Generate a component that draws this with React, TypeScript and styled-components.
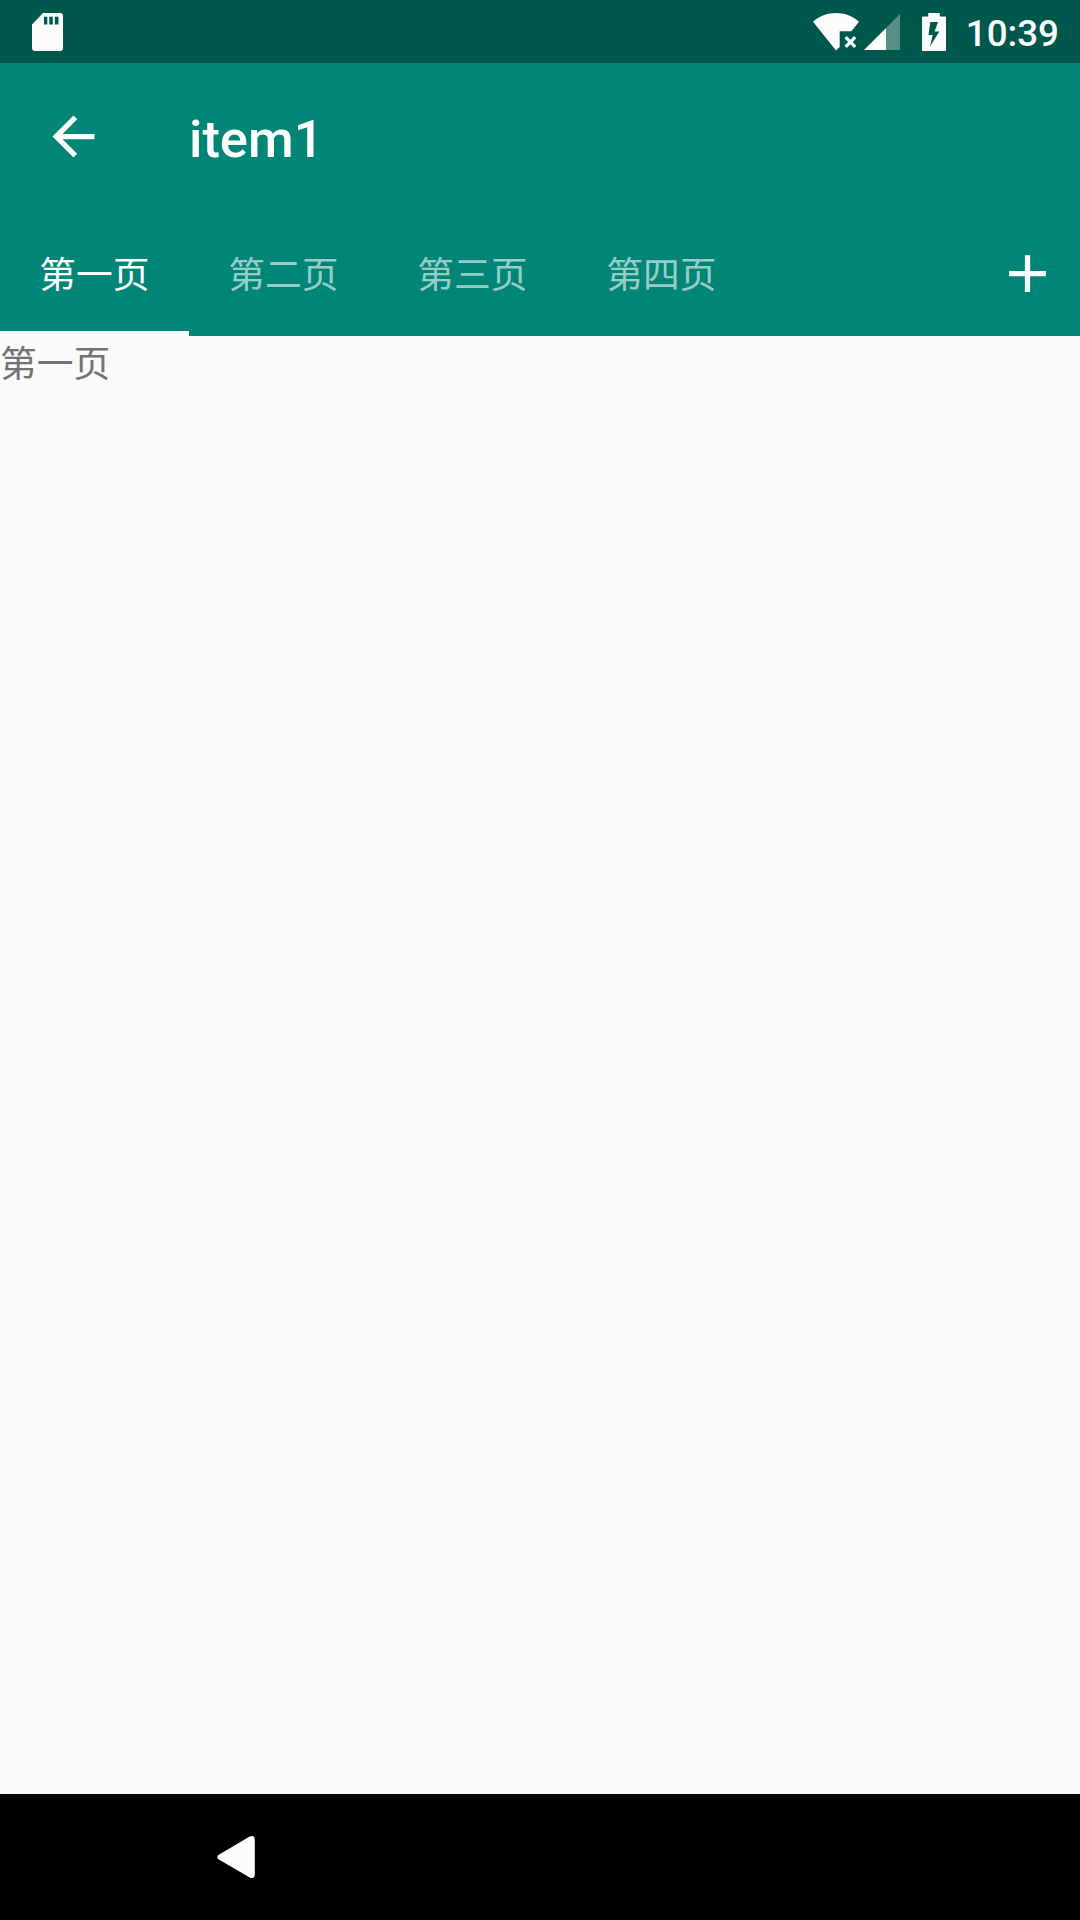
import React, { useState } from "react";
import styled, { createGlobalStyle } from "styled-components";

const GlobalStyle = createGlobalStyle`
  * { box-sizing: border-box; }
  body { margin: 0; }
`;

const Screen = styled.div`
  display: flex;
  flex-direction: column;
  width: 1080px;
  height: 1920px;
  overflow: hidden;
  background: #fafafa;
  font-family: Roboto, "Noto Sans CJK SC", sans-serif;
`;

const StatusBar = styled.header`
  display: flex;
  flex: none;
  align-items: center;
  height: 63px;
  padding: 0 21px 0 32px;
  background: #00574b;
  color: #fcfcfc;
`;

const StatusIcon = styled.svg<{ $gap?: number }>`
  display: block;
  flex: none;
  margin-right: ${(p) => p.$gap ?? 0}px;
`;

const Spacer = styled.div`
  flex: 1;
`;

const Clock = styled.time`
  font-size: 36.75px;
  font-weight: 500;
  line-height: 43px;
  padding-top: 3px;
`;

const Toolbar = styled.div`
  display: flex;
  flex: none;
  align-items: center;
  height: 147px;
  padding-left: 42px;
  gap: 84px;
  background: #008577;
  color: #fff;
`;

const IconButton = styled.button`
  display: flex;
  width: 63px;
  height: 63px;
  padding: 0;
  border: 0;
  background: none;
  color: #fff;
`;

const Title = styled.h1`
  margin: 0;
  padding-top: 5px;
  font-size: 52.5px;
  font-weight: 500;
  line-height: 62px;
`;

const TabBar = styled.nav`
  display: flex;
  flex: none;
  align-items: center;
  justify-content: space-between;
  height: 126px;
  padding-right: 21px;
  background: #008577;
`;

const TabList = styled.div`
  display: flex;
  height: 100%;
`;

const Tab = styled.button<{ $active: boolean }>`
  width: 189px;
  padding: 2px 0 0;
  border: 0;
  border-bottom: 5px solid ${(p) => (p.$active ? "#fff" : "transparent")};
  background: none;
  color: ${(p) => (p.$active ? "#fff" : "rgba(255, 255, 255, 0.6)")};
  font-family: "Noto Sans CJK SC", sans-serif;
  font-size: 36.75px;
  font-weight: 400;
  line-height: 54px;
`;

const Page = styled.main`
  flex: 1;
  color: #737373;
  font-family: "Noto Sans CJK SC", sans-serif;
  font-size: 36.75px;
  font-weight: 400;
  line-height: 50px;
`;

const NavigationBar = styled.footer`
  display: flex;
  flex: none;
  align-items: center;
  height: 126px;
  padding-left: 217px;
  background: #000;
`;

const pages = ["第一页", "第二页", "第三页", "第四页"];

export default function App() {
  const [current, setCurrent] = useState(0);
  return (
    <Screen>
      <GlobalStyle />
      <StatusBar>
        <StatusIcon width="31" height="38" viewBox="0 0 31 38" fill="currentColor">
          <path
            fillRule="evenodd"
            d="M11 0H28A3 3 0 0 1 31 3V35A3 3 0 0 1 28 38H3A3 3 0 0 1 0 35V11.500ZM12 3.700V11.500H15.300V3.700ZM17.300 3.700V11.500H20.800V3.700ZM22.900 3.700V11.500H26.500V3.700Z"
          />
        </StatusIcon>
        <Spacer />
        <StatusIcon $gap={4} width="47" height="38" viewBox="0 0 47 38" fill="currentColor">
          <path d="M0 8.700C6.200 3.200 14.300 0 23 0S39.800 3.200 46 8.700L38.400 18.300H26.700V34L23 37.500Z" />
          <path d="M32.600 24.200L42.200 33.800M42.200 24.200L32.600 33.800" fill="none" stroke="currentColor" strokeWidth="3.300" />
        </StatusIcon>
        <StatusIcon $gap={22} width="36" height="36" viewBox="0 0 36 36" fill="currentColor">
          <path d="M36 0V36H22V14Z" opacity="0.35" />
          <path d="M22 14V36H0Z" />
        </StatusIcon>
        <StatusIcon $gap={20} width="24" height="38" viewBox="0 0 24 38" fill="currentColor">
          <path
            fillRule="evenodd"
            d="M6.200 0H17.800V3.500H23.500L24 4V37.500L23.500 38H.5L0 37.500V4L.5 3.500H6.200ZM8.300 9L6.500 22H10.700L8 33.500L17.300 18.500H12.600L16 9Z"
          />
        </StatusIcon>
        <Clock>10:39</Clock>
      </StatusBar>
      <Toolbar>
        <IconButton aria-label="Back">
          <svg width="63" height="63" viewBox="0 0 24 24" fill="currentColor">
            <path d="M20 11H7.830l5.590-5.590L12 4l-8 8 8 8 1.410-1.410L7.830 13H20v-2z" />
          </svg>
        </IconButton>
        <Title>item1</Title>
      </Toolbar>
      <TabBar>
        <TabList>
          {pages.map((name, i) => (
            <Tab key={name} $active={i === current} onClick={() => setCurrent(i)}>
              {name}
            </Tab>
          ))}
        </TabList>
        <IconButton aria-label="Add">
          <svg width="63" height="63" viewBox="0 0 24 24" fill="currentColor">
            <path d="M19 13h-6v6h-2v-6H5v-2h6V5h2v6h6v2z" />
          </svg>
        </IconButton>
      </TabBar>
      <Page>{pages[current]}</Page>
      <NavigationBar>
        <svg width="38" height="42" viewBox="0 0 38 42" fill="#fcfcfc">
          <path d="M1.400 18.900L32.700 .6Q37.700-1.500 37.800 4V38Q37.700 43.500 32.700 41.400L1.400 23.200Q-.9 21 1.400 18.900Z" />
        </svg>
      </NavigationBar>
    </Screen>
  );
}
